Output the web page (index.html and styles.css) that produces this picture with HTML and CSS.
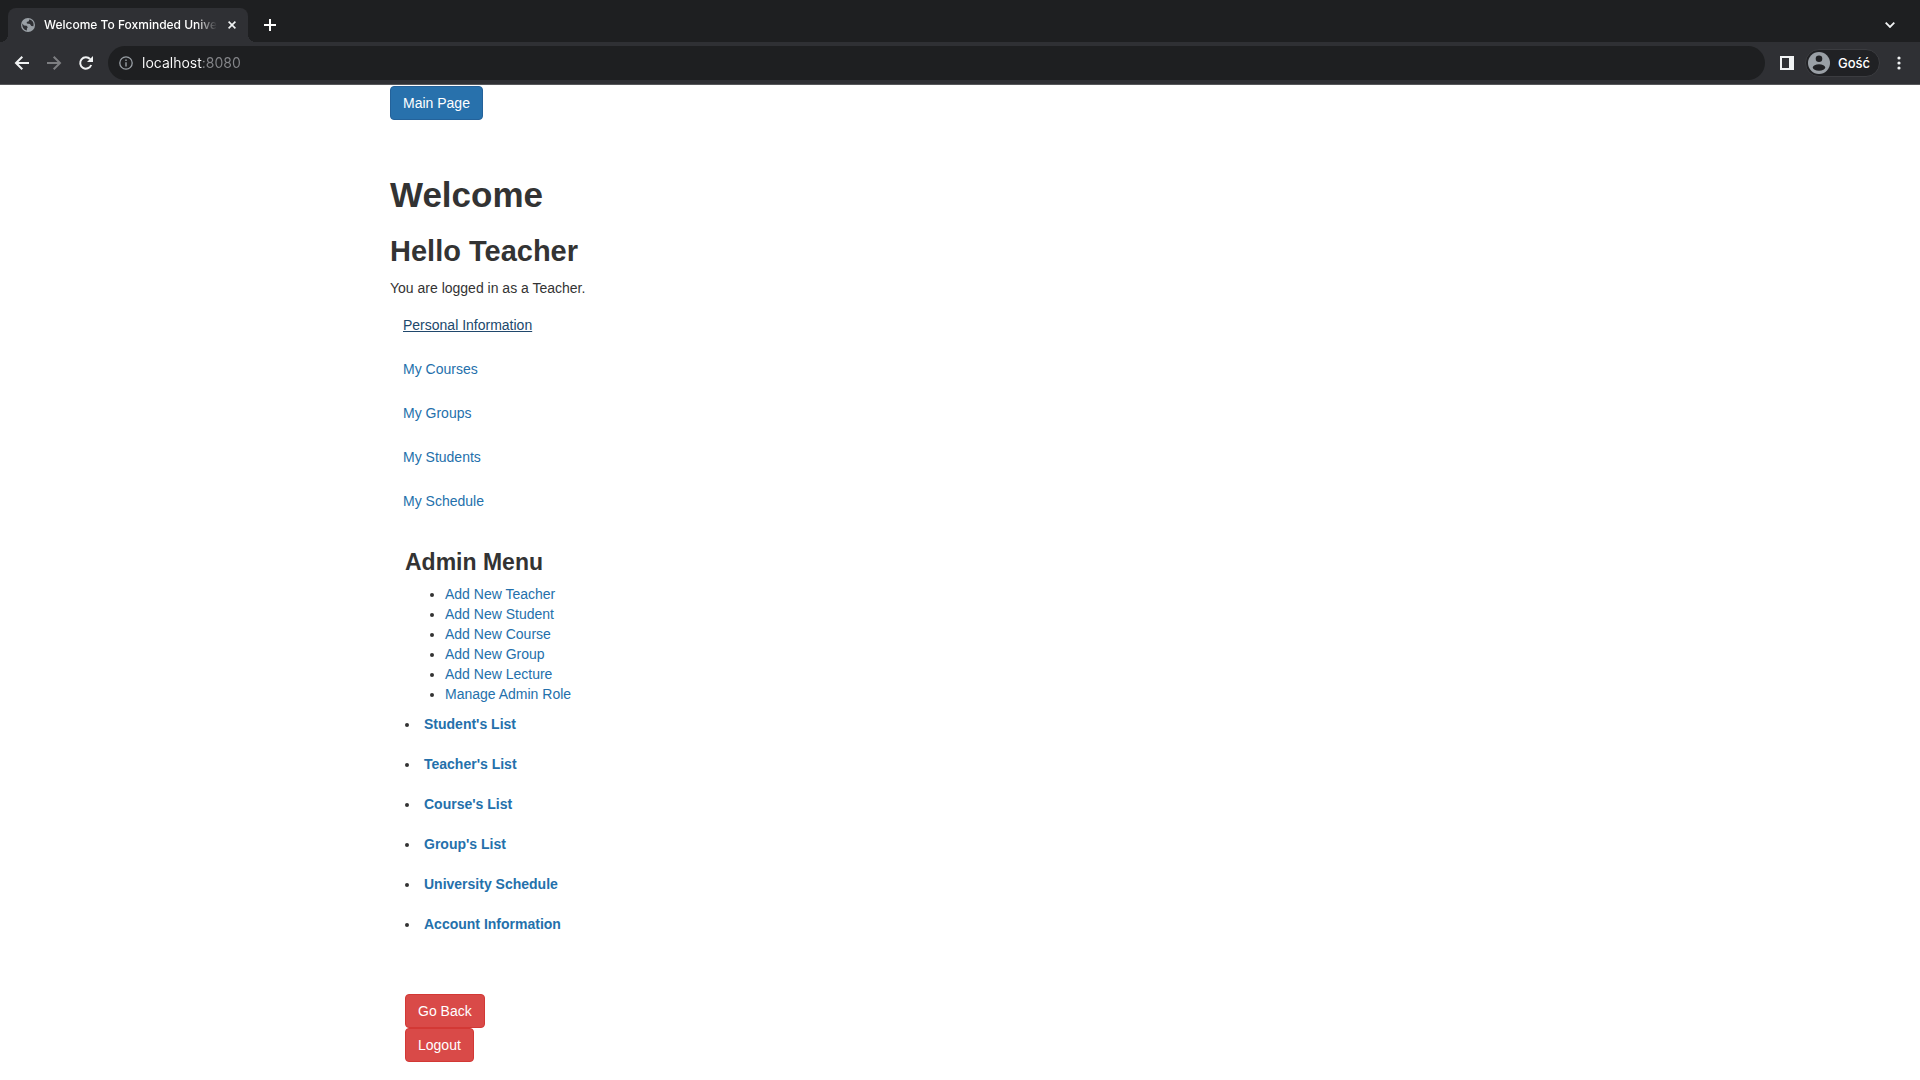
FILE: index.html
```html
<!DOCTYPE html>
<html lang="en">
<head>
<meta charset="utf-8">
<title>Welcome To Foxminded University</title>
<link rel="stylesheet" href="styles.css">
</head>
<body>
<header class="browser">
  <div class="tab-strip">
    <div class="tab">
      <svg width="14" height="14" viewBox="0 0 14 14"><circle cx="7" cy="7" r="7" fill="#9aa0a6"/><path d="M1.3 5.6 3 7.4 5.7 7.7 6.8 9.3 5.9 10.5V12.5C3 12.2 1 9.6 1.300 5.600ZM8.200 1.500 7.800 3.200 5.700 4 5.900 5.600 8.900 5.900 10.300 7.900 12.400 8.200C13.300 5 11.500 2.100 8.200 1.500Z" fill="#2f3034"/></svg>
      <span class="tab-title">Welcome To Foxminded University</span>
      <button class="icon-button" aria-label="Close tab"><svg width="8" height="8" viewBox="0 0 8 8" fill="none" stroke="#f1f3f4" stroke-width="1.600"><path d="M.6.6 7.400 7.400M7.400.6.6 7.400"/></svg></button>
    </div>
    <button class="icon-button new-tab" aria-label="New tab"><svg width="12" height="12" viewBox="0 0 12 12" stroke="#fff" stroke-width="2"><path d="M6 0V12M0 6H12"/></svg></button>
    <button class="icon-button tab-search" aria-label="Search tabs"><svg width="10" height="6" viewBox="0 0 10 6" fill="none" stroke="#f1f3f4" stroke-width="1.800"><path d="M.7.700 5 5 9.300.700"/></svg></button>
  </div>
  <div class="toolbar">
    <div class="nav-buttons">
      <button class="icon-button" aria-label="Back"><svg width="16" height="16" viewBox="0 0 16 16" fill="none" stroke="#f1f3f4" stroke-width="2"><path d="M15 8H2.500M8.300 1.700 2 8 8.300 14.300"/></svg></button>
      <button class="icon-button" aria-label="Forward"><svg width="16" height="16" viewBox="0 0 16 16" fill="none" stroke="#7d7e81" stroke-width="2"><path d="M1 8H13.500M7.700 1.700 14 8 7.700 14.300"/></svg></button>
      <button class="icon-button" aria-label="Reload"><svg width="16" height="16" viewBox="0 0 16 16"><path d="M13.200 10A5.700 5.700 0 1 1 12.200 4.200" fill="none" stroke="#f1f3f4" stroke-width="2"/><path d="M15 1V7H9Z" fill="#f1f3f4"/></svg></button>
    </div>
    <label class="omnibox">
      <svg width="14" height="14" viewBox="0 0 14 14"><circle cx="7" cy="7" r="6.200" fill="none" stroke="#9aa0a6" stroke-width="1.300"/><path d="M6.300 6.200h1.400V10.500H6.300ZM6.300 3.600h1.400V5H6.300Z" fill="#9aa0a6"/></svg>
      <input class="address" type="text" value="localhost:8080" aria-label="Address">
    </label>
    <button class="icon-button" aria-label="Side panel"><svg width="14" height="14" viewBox="0 0 14 14"><path d="M0 0H14V14H0ZM2 2V12H9V2Z" fill="#f1f3f4" fill-rule="evenodd"/></svg></button>
    <button class="profile"><svg width="22" height="22" viewBox="0 0 22 22"><circle cx="11" cy="11" r="11" fill="#9aa0a6"/><circle cx="11" cy="6.800" r="3.300" fill="#202124"/><ellipse cx="11" cy="15.500" rx="6.200" ry="3.300" fill="#202124"/></svg>Gość</button>
    <button class="icon-button menu" aria-label="Menu"><svg width="4" height="14" viewBox="0 0 4 14" fill="#f1f3f4"><circle cx="2" cy="2" r="1.600"/><circle cx="2" cy="7" r="1.600"/><circle cx="2" cy="12" r="1.600"/></svg></button>
  </div>
</header>
<main class="container">
  <a class="btn btn-primary" href="#">Main Page</a>
  <h1>Welcome</h1>
  <h2>Hello Teacher</h2>
  <p>You are logged in as a Teacher.</p>
  <nav class="personal">
    <a class="btn btn-link is-hovered" href="#">Personal Information</a>
    <a class="btn btn-link" href="#">My Courses</a>
    <a class="btn btn-link" href="#">My Groups</a>
    <a class="btn btn-link" href="#">My Students</a>
    <a class="btn btn-link" href="#">My Schedule</a>
  </nav>
  <section class="admin">
    <h3>Admin Menu</h3>
    <ul class="admin-links">
      <li><a href="#">Add New Teacher</a></li>
      <li><a href="#">Add New Student</a></li>
      <li><a href="#">Add New Course</a></li>
      <li><a href="#">Add New Group</a></li>
      <li><a href="#">Add New Lecture</a></li>
      <li><a href="#">Manage Admin Role</a></li>
    </ul>
    <ul class="lists">
      <li><a href="#">Student's List</a></li>
      <li><a href="#">Teacher's List</a></li>
      <li><a href="#">Course's List</a></li>
      <li><a href="#">Group's List</a></li>
      <li><a href="#">University Schedule</a></li>
      <li><a href="#">Account Information</a></li>
    </ul>
    <div class="actions">
      <button class="btn btn-danger">Go Back</button>
      <button class="btn btn-danger">Logout</button>
    </div>
  </section>
</main>
</body>
</html>
```
FILE: styles.css
```css
* { box-sizing: border-box; }

body {
  margin: 0;
  background: #fff;
  color: #333;
  font: 14px/20px "Liberation Sans", Arial, sans-serif;
}

a { color: #2470ab; text-decoration: none; }
svg { display: block; flex: none; }
button { font: inherit; cursor: pointer; }

/* Browser bar */
.browser {
  background: #2f3034;
  border-bottom: 1px solid #56575a;
  font-family: Inter, sans-serif;
}

.icon-button {
  flex: none;
  padding: 0;
  border: 0;
  background: none;
}

.tab-strip {
  display: flex;
  align-items: center;
  height: 42px;
  padding: 8px 25px 0 8px;
  background: #1e1f21;
}

.tab {
  position: relative;
  display: flex;
  align-items: center;
  width: 240px;
  height: 34px;
  padding: 0 12px 0 13px;
  border-radius: 8px 8px 0 0;
  background: #2f3034;
}

.tab::before,
.tab::after {
  content: "";
  position: absolute;
  bottom: 0;
  width: 8px;
  height: 8px;
}

.tab::before { right: 100%; background: radial-gradient(circle at 0 0, #1e1f21 8px, #2f3034 8px); }
.tab::after { left: 100%; background: radial-gradient(circle at 100% 0, #1e1f21 8px, #2f3034 8px); }

.tab-title {
  flex: 1;
  margin: 0 11px 0 9px;
  overflow: hidden;
  color: #fff;
  font-size: 12px;
  font-weight: 500;
  white-space: nowrap;
  mask-image: linear-gradient(90deg, #000 88%, transparent);
}

.new-tab { margin-left: 16px; }
.tab-search { margin-left: auto; }

.toolbar {
  display: flex;
  align-items: center;
  height: 42px;
  padding: 0 19px 0 14px;
}

.nav-buttons { display: flex; gap: 16px; }

.omnibox {
  display: flex;
  flex: 1;
  align-items: center;
  gap: 9px;
  height: 34px;
  margin: 0 15px 0 14px;
  padding: 0 11px;
  border-radius: 17px;
  background: #1e1f21;
}

.address {
  flex: 1;
  padding: 0;
  border: 0;
  outline: 0;
  background: linear-gradient(90deg, #fff 61px, #85868a 61px);
  background-clip: text;
  color: #fff;
  font: 14px/20px Inter, sans-serif;
  -webkit-text-fill-color: transparent;
}

.profile {
  display: flex;
  align-items: center;
  gap: 8px;
  height: 28px;
  margin: 0 17px 0 11px;
  padding: 0 9px 0 2px;
  border: 1px solid #3b3c40;
  border-radius: 14px;
  background: #202124;
  color: #fff;
  font-size: 13px;
  font-weight: 500;
}

/* Page */
.container {
  max-width: 1170px;
  margin: 0 auto;
  padding: 1px 15px 18px;
}

h1, h2, h3, p, ul { margin: 0 0 10px; }
h1 { margin: 55px 0 20px; font-size: 35px; line-height: 40px; }
h2 { font-size: 29px; line-height: 33px; }
h3 { margin-bottom: 9px; font-size: 23px; line-height: 26px; }

.btn {
  display: inline-block;
  padding: 6px 12px;
  border: 1px solid transparent;
  border-radius: 4px;
  vertical-align: middle;
}

.btn-primary { background: #2871ac; border-color: #24629a; color: #fff; }
.btn-danger { background: #d94a48; border-color: #d33835; color: #fff; }

.personal,
.actions {
  display: flex;
  flex-direction: column;
  align-items: flex-start;
}

.personal { gap: 10px; }
.is-hovered { color: #20486c; text-decoration: underline; }

.admin { padding: 31px 15px 0; }
.admin-links { padding-left: 40px; }

.lists {
  display: grid;
  gap: 20px;
  margin-bottom: 60px;
  padding: 0;
  font-weight: bold;
  list-style-position: inside;
}
```
